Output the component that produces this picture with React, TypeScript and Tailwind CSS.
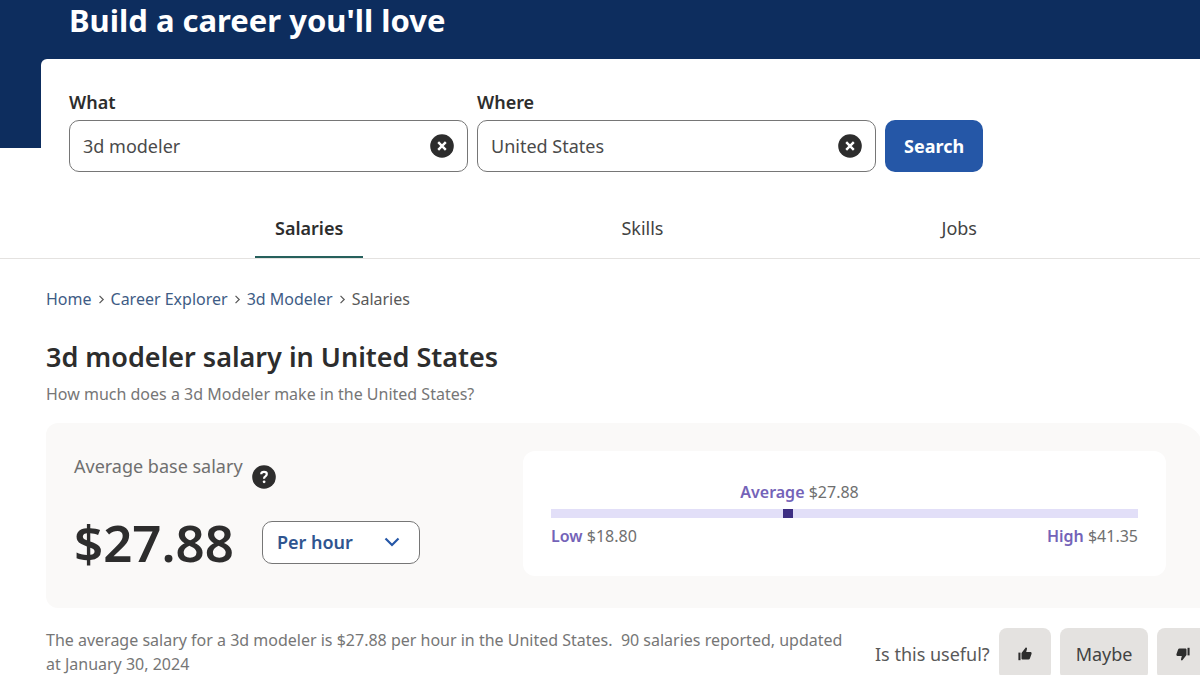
import { useState } from "react";
import type { ReactNode } from "react";

type SalaryRange = {
  low: number;
  average: number;
  high: number;
};

const salary: SalaryRange = { low: 18.8, average: 27.88, high: 41.35 };

const tabs = ["Salaries", "Skills", "Jobs"];

const breadcrumbs = ["Home", "Career Explorer", "3d Modeler"];

function formatMoney(value: number): string {
  return `$${value.toFixed(2)}`;
}

function ClearIcon() {
  return (
    <svg viewBox="0 0 24 24" className="size-6" aria-hidden="true">
      <circle cx="12" cy="12" r="11.8" fill="#2d2d2d" />
      <path d="M8.2 8.2l7.6 7.6M15.8 8.2l-7.6 7.6" stroke="#fff" strokeWidth="2.4" />
    </svg>
  );
}

function HelpIcon() {
  return (
    <svg viewBox="0 0 24 24" className="size-6" aria-hidden="true">
      <circle cx="12" cy="12" r="11.8" fill="#2d2d2d" />
      <path
        d="M9.2 9.2C9.3 7.7 10.4 6.9 12 6.9s2.8.9 2.8 2.2c0 1.1-.5 1.6-1.4 2.3-.9.6-1.3 1-1.3 1.9v.5"
        fill="none"
        stroke="#fff"
        strokeWidth="2.2"
      />
      <circle cx="12.1" cy="16.8" r="1.4" fill="#fff" />
    </svg>
  );
}

function ThumbIcon({ down = false }: { down?: boolean }) {
  return (
    <svg
      viewBox="0 0 14 14"
      className={down ? "size-[14px] rotate-180" : "size-[14px]"}
      fill="#2d2d2d"
      aria-hidden="true"
    >
      <path d="M.4 5.6h2.1v7.6H.4z" />
      <path d="M3.5 5.9 7.4.9c.3-.4.8-.5 1.2-.2.4.2.5.7.4 1.1l-.8 3.3h4.3c.7 0 1.2.6 1.1 1.3l-.1.7-1.6 4.5c-.2.7-.7 1-1.4 1H4.8c-.7 0-1.3-.5-1.3-1.2z" />
    </svg>
  );
}

function Chevron({ className }: { className: string }) {
  return (
    <svg viewBox="0 0 16 16" className={className} fill="none" stroke="currentColor" aria-hidden="true">
      <path d="M1.5 4.5 8 11l6.5-6.5" strokeWidth="2.2" />
    </svg>
  );
}

function SearchField({
  id,
  label,
  initialValue,
}: {
  id: string;
  label: string;
  initialValue: string;
}) {
  const [value, setValue] = useState(initialValue);

  return (
    <div className="w-[399px]">
      <label htmlFor={id} className="block pb-1 text-lg leading-7 font-semibold">
        {label}
      </label>
      <div className="flex h-[52px] items-center rounded-[10px] border border-[#767676] px-[13px]">
        <input
          id={id}
          value={value}
          onChange={(event) => setValue(event.target.value)}
          className="min-w-0 flex-1 text-lg text-[#4a4a4a] outline-none"
        />
        <button type="button" aria-label={`Clear ${label}`} onClick={() => setValue("")}>
          <ClearIcon />
        </button>
      </div>
    </div>
  );
}

function FeedbackButton({ label, children }: { label: string; children: ReactNode }) {
  return (
    <button
      type="button"
      aria-label={label}
      className="flex h-[52px] min-w-[52px] shrink-0 items-center justify-center rounded-lg bg-[#e4e2e0] px-4 text-lg text-[#424242]"
    >
      {children}
    </button>
  );
}

function RangeChart({ range }: { range: SalaryRange }) {
  const position = ((range.average - range.low) / (range.high - range.low)) * 100;

  return (
    <div className="flex-1 rounded-xl bg-white px-7 pt-[27px] pb-[26px] text-base text-[#6f6f6f]">
      <div className="flex justify-center pr-[90px] leading-7">
        <p>
          <span className="font-semibold text-[#7463b8]">Average</span> {formatMoney(range.average)}
        </p>
      </div>
      <div className="mt-[3px] h-[9px] bg-[#e2dff8]">
        <div className="flex h-full" style={{ width: `${position}%` }}>
          <div className="-mr-1.5 ml-auto h-full w-[10px] bg-[#3d2e83]" />
        </div>
      </div>
      <div className="mt-1 flex justify-between leading-7">
        <p>
          <span className="font-semibold text-[#7463b8]">Low</span> {formatMoney(range.low)}
        </p>
        <p>
          <span className="font-semibold text-[#7463b8]">High</span> {formatMoney(range.high)}
        </p>
      </div>
    </div>
  );
}

export default function App() {
  const [activeTab, setActiveTab] = useState("Salaries");
  const summary = `The average salary for a 3d modeler is ${formatMoney(salary.average)} per hour in the United States.\u00a0 90 salaries reported, updated at January 30, 2024`;

  return (
    <div className="h-screen overflow-hidden bg-white font-['Noto_Sans',sans-serif] text-[#2d2d2d]">
      <header className="h-[148px] bg-[#0d2d5e] pl-[69px]">
        <h1 className="text-[31px] leading-10 font-bold text-white">Build a career you'll love</h1>
      </header>

      <div className="-mt-[89px] ml-[41px] rounded-tl-md bg-white pt-[29px] pl-7">
        <form className="flex items-end gap-[9px]" onSubmit={(event) => event.preventDefault()}>
          <SearchField id="what" label="What" initialValue="3d modeler" />
          <SearchField id="where" label="Where" initialValue="United States" />
          <button
            type="submit"
            className="h-[52px] rounded-[10px] bg-[#2557a7] px-[19px] text-lg font-bold text-white"
          >
            Search
          </button>
        </form>
      </div>

      <nav className="mt-7 flex justify-between border-b border-[#e4e2e0] pr-[203px] pl-[255px]">
        {tabs.map((tab) => (
          <button
            key={tab}
            type="button"
            onClick={() => setActiveTab(tab)}
            className={
              tab === activeTab
                ? "h-[58px] border-b-2 border-[#26605c] px-5 text-lg font-semibold"
                : "h-[58px] border-b-2 border-transparent px-5 text-lg text-[#424242]"
            }
          >
            {tab}
          </button>
        ))}
      </nav>

      <main className="pl-[46px]">
        <nav className="flex items-center pt-7 text-base leading-6" aria-label="Breadcrumb">
          {breadcrumbs.map((crumb) => (
            <span key={crumb} className="flex items-center">
              <a href="#" className="text-[#3e5c85]">
                {crumb}
              </a>
              <Chevron className="mx-[5px] size-[9px] -rotate-90 text-[#595959]" />
            </span>
          ))}
          <span className="text-[#595959]">Salaries</span>
        </nav>

        <h2 className="mt-[26px] text-[27px] leading-10 font-semibold">3d modeler salary in United States</h2>
        <p className="mt-[5px] text-base leading-6 text-[#767676]">
          How much does a 3d Modeler make in the United States?
        </p>

        <section className="mt-[17px] -mr-1 flex items-start rounded-l-xl rounded-tr-[28px] bg-[#faf9f8] py-7 pr-[38px] pl-7">
          <div className="w-[449px] shrink-0">
            <div className="flex items-start gap-[9px]">
              <h3 className="text-lg leading-[30px] text-[#6f6f6f]">Average base salary</h3>
              <button type="button" aria-label="About this salary" className="mt-[14px]">
                <HelpIcon />
              </button>
            </div>
            <div className="mt-[22px] flex items-center gap-7 pb-[7px]">
              <p className="text-[51px] leading-[62px] font-semibold">{formatMoney(salary.average)}</p>
              <div className="grid w-[158px] items-center">
                <select
                  aria-label="Pay period"
                  defaultValue="hour"
                  className="col-start-1 row-start-1 h-[43px] appearance-none rounded-[10px] border border-[#767676] bg-white px-[14px] text-lg font-semibold text-[#2f5590]"
                >
                  <option value="hour">Per hour</option>
                  <option value="month">Per month</option>
                  <option value="year">Per year</option>
                </select>
                <Chevron className="pointer-events-none col-start-1 row-start-1 mr-5 size-4 justify-self-end text-[#2557a7]" />
              </div>
            </div>
          </div>
          <RangeChart range={salary} />
        </section>

        <div className="flex items-start pt-5">
          <p className="w-[829px] shrink-0 pr-7 text-base leading-6 text-[#767676]">{summary}</p>
          <div className="flex items-center gap-[9px]">
            <p className="shrink-0 text-lg text-[#595959]">Is this useful?</p>
            <FeedbackButton label="Yes">
              <ThumbIcon />
            </FeedbackButton>
            <FeedbackButton label="Maybe">Maybe</FeedbackButton>
            <FeedbackButton label="No">
              <ThumbIcon down />
            </FeedbackButton>
          </div>
        </div>
      </main>
    </div>
  );
}
